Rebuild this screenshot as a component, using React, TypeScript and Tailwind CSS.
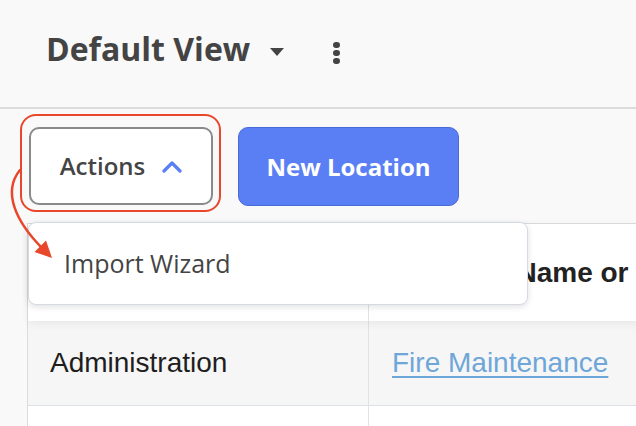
export default function App() {
  return (
    <div className="relative h-[426px] w-[636px] overflow-hidden bg-[#f9f9f9] font-['Open_Sans',sans-serif]">
      {/* header */}
      <div className="flex h-[109px] items-start border-b-2 border-[#dcdcdc] pl-[46px] pt-[27px]">
        <h1 className="text-[32px] font-bold leading-[44px] text-[#444]">Default View</h1>
        <svg className="ml-[20px] mt-[21px]" width="14" height="8" viewBox="0 0 14 8">
          <polygon points="0,0 14,0 7,8" fill="#444" />
        </svg>
        <div className="ml-[49px] mt-[15px] flex flex-col gap-[2px]">
          <span className="h-[6px] w-[7px] rounded-full bg-[#444]" />
          <span className="h-[6px] w-[7px] rounded-full bg-[#444]" />
          <span className="h-[6px] w-[7px] rounded-full bg-[#444]" />
        </div>
      </div>

      {/* toolbar */}
      <div className="relative z-20 flex items-start gap-[25px] pl-[29px] pt-[18px]">
        <div className="relative">
          <button className="flex h-[78px] w-[184px] items-center justify-center gap-[17px] rounded-[10px] border-2 border-[#8a8a8a] bg-white text-[24px] font-semibold text-[#444]">
            Actions
            <svg width="20" height="13" viewBox="0 0 20 13">
              <path d="M2 11 L10 3 L18 11" fill="none" stroke="#5b7ff5" strokeWidth="3.2" strokeLinecap="round" strokeLinejoin="round" />
            </svg>
          </button>
          <span className="pointer-events-none absolute -bottom-[7px] -left-[9px] -right-[8px] -top-[13px] rounded-[16px] border-[2.5px] border-[#e8472c]" />
          <div className="absolute left-[-1px] top-[95px] flex h-[83px] w-[500px] items-center rounded-[8px] border border-[#d5dae2] bg-white pl-[35px] shadow-[0_2px_6px_rgba(0,0,0,0.12)]">
            <span className="text-[25px] text-[#444]">Import Wizard</span>
          </div>
        </div>
        <button className="flex h-[79px] w-[221px] items-center justify-center rounded-[10px] border border-[#4a6ad6] bg-[#5a7ff5] text-[24px] font-bold text-white">
          New Location
        </button>
      </div>

      {/* table */}
      <div className="relative z-0 ml-[27px] mt-[17px] w-[900px] border-l border-[#dcdcdc] font-['Liberation_Sans',Arial,sans-serif] text-[28px]">
        <div className="relative z-10 flex h-[98px] border-t border-[#d9d9d9] bg-white shadow-[0_3px_8px_rgba(0,0,0,0.06)]">
          <div className="w-[341px] border-r border-[#e2e2e2]" />
          <div className="flex items-center whitespace-nowrap pl-[23px] font-bold text-[#222]">Location Name or</div>
        </div>
        <div className="flex h-[85px] border-b border-[#dde1ea] bg-[#f6f6f6]">
          <div className="flex w-[341px] items-center border-r border-[#e2e2e2] pl-[22px] text-[#1e1e1e]">Administration</div>
          <div className="flex items-center pl-[23px]">
            <a href="#" className="text-[#6fa6d9] underline decoration-[2px] underline-offset-[4px]">Fire Maintenance</a>
          </div>
        </div>
        <div className="flex h-[40px] bg-white">
          <div className="w-[341px] border-r border-[#e2e2e2]" />
        </div>
      </div>

      {/* annotation arrow */}
      <svg className="pointer-events-none absolute left-0 top-[160px] z-30" width="60" height="100" viewBox="0 0 60 100">
        <path d="M20 10 C 2 32, 16 62, 43 89" fill="none" stroke="#e8472c" strokeWidth="2.5" strokeLinecap="round" />
        <polygon points="52,98 34.5,92 46,80.5" fill="#e8472c" />
      </svg>
    </div>
  );
}
